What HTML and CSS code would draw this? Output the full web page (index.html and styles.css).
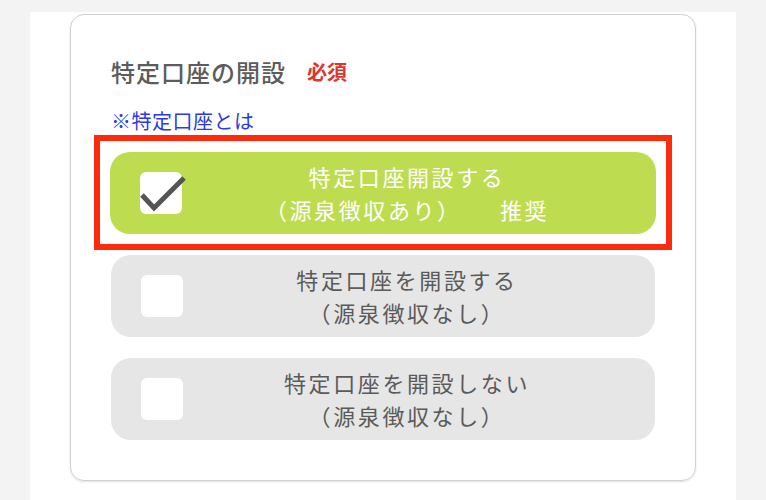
FILE: index.html
```html
<!DOCTYPE html>
<html lang="ja">
<head>
    <meta charset="UTF-8">
    <meta name="viewport" content="width=device-width, initial-scale=1.0">
    <title>特定口座の開設</title>
    <link rel="stylesheet" href="styles.css">
</head>
<body>

<div class="page">
    <div class="account-card">
        <div class="card-title">
            <span class="label">特定口座の開設</span>
            <span class="required">必須</span>
        </div>
        <a class="about-link" href="#">※特定口座とは</a>

        <div class="options">
            <div class="highlight">
                <div class="option selected">
                    <span class="check-box">
                        <svg class="check-mark" viewBox="0 0 46 40" width="46" height="40">
                            <polyline points="2,21 14,34 44,4" fill="none" stroke="#555" stroke-width="5" stroke-linejoin="miter"/>
                        </svg>
                    </span>
                    <div class="option-text">
                        <p>特定口座開設する</p>
                        <p>（源泉徴収あり）　　推奨</p>
                    </div>
                </div>
            </div>

            <div class="option">
                <span class="check-box"></span>
                <div class="option-text">
                    <p>特定口座を開設する</p>
                    <p>（源泉徴収なし）</p>
                </div>
            </div>

            <div class="option">
                <span class="check-box"></span>
                <div class="option-text">
                    <p>特定口座を開設しない</p>
                    <p>（源泉徴収なし）</p>
                </div>
            </div>
        </div>
    </div>
</div>

</body>
</html>
```

FILE: styles.css
```css
html, body {
    height: 100%;
}
body {
    margin: 0;
    background-color: #f3f3f3;
    font-family: "Noto Sans CJK JP", "Noto Sans", sans-serif;
    color: #5a5a5a;
}
.page {
    background: #ffffff;
    margin: 12px 30px 0;
    padding: 2px 40px 40px;
    min-height: calc(100% - 12px);
    box-sizing: border-box;
}
.account-card {
    border: 1.5px solid #d0d0d0;
    border-radius: 14px;
    box-shadow: 0 1px 2px rgba(0,0,0,0.12);
    padding: 40px 40px 40px;
}
.card-title {
    display: flex;
    align-items: center;
    height: 32px;
}
.card-title .label {
    font-size: 24px;
    font-weight: 500;
    letter-spacing: 1px;
    color: #5c5c5c;
}
.card-title .required {
    margin-left: 21px;
    font-size: 20px;
    font-weight: bold;
    color: #e0342c;
}
.about-link {
    display: block;
    margin-top: 20px;
    font-size: 20px;
    line-height: 28px;
    color: #2d39e6;
    text-decoration: none;
    letter-spacing: 0.5px;
}
.options {
    display: flex;
    flex-direction: column;
    gap: 21px;
    margin-top: 17px;
}
.highlight {
    margin: -17px -17px -16px;
    padding: 11px 10px 10px;
    border: 6px solid #ff2a0c;
}
.option {
    display: flex;
    align-items: center;
    height: 82px;
    padding: 0 24px 0 30px;
    border-radius: 20px;
    background: #e6e6e6;
}
.option.selected {
    background: #bedc50;
    color: #ffffff;
}
.check-box {
    position: relative;
    flex: none;
    width: 42px;
    height: 42px;
    border-radius: 6px;
    background: #ffffff;
}
.check-mark {
    position: absolute;
    left: 0;
    top: 2px;
}
.option-text {
    flex: 1;
    text-align: center;
    font-size: 22px;
    line-height: 33px;
    letter-spacing: 2.6px;
}
.option-text p {
    margin: 0;
}
```
